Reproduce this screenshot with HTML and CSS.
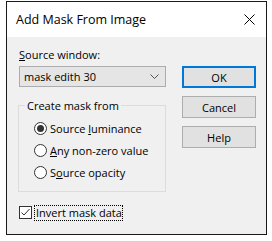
FILE: index.html
```html
<!DOCTYPE html>
<html>
<head>
<meta charset="utf-8">
<link rel="stylesheet" href="styles.css">
</head>
<body>
<div class="window">
  <div class="titlebar">
    <span class="title">Add Mask From Image</span>
    <svg class="close" width="11" height="11" viewBox="0 0 11 11"><path d="M0.5 0.5 L10.5 10.5 M10.5 0.5 L0.5 10.5" stroke="#000" stroke-width="1" fill="none"/></svg>
  </div>
  <div class="content">
    <div class="left">
      <div class="label"><u>S</u>ource window:</div>
      <div class="combo">
        <span>mask edith 30</span>
        <svg class="chev" width="9" height="5" viewBox="0 0 9 5"><path d="M0.5 0.5 L4.5 4.5 L8.5 0.5" stroke="#555" stroke-width="1" fill="none"/></svg>
      </div>
      <fieldset class="group">
        <legend>Create mask from</legend>
        <div class="radio"><span class="circle on"></span><span>Source <u>l</u>uminance</span></div>
        <div class="radio"><span class="circle"></span><span><u>A</u>ny non-zero value</span></div>
        <div class="radio"><span class="circle"></span><span>S<u>o</u>urce opacity</span></div>
      </fieldset>
      <div class="check">
        <span class="box"><svg width="11" height="11" viewBox="0 0 11 11"><path d="M1.5 5.5 L4 8 L9.5 2" stroke="#333" stroke-width="1" fill="none"/></svg></span>
        <span class="focus">Invert mask data</span>
      </div>
    </div>
    <div class="buttons">
      <div class="btn default">OK</div>
      <div class="btn">Cancel</div>
      <div class="btn">Help</div>
    </div>
  </div>
</div>
</body>
</html>
```
FILE: styles.css
```css
* { box-sizing: border-box; }
html, body { margin: 0; padding: 0; background: #fff; }
body {
  font-family: "Open Sans", "Noto Sans", sans-serif;
  font-size: 11px;
  color: #000;
}
.window {
  margin: 1px 0 0 6px;
  width: 261px;
  height: 234px;
  border: 1px solid #1a1a1a;
  background: #f0f0f0;
  display: flex;
  flex-direction: column;
}
.titlebar {
  height: 35px;
  background: #fff;
  display: flex;
  align-items: center;
  justify-content: space-between;
  padding: 0 11px 0 9px;
}
.title { font-size: 12.5px; }
.close { display: block; }
.content {
  display: flex;
  padding: 10px 0 0 12px;
  gap: 16px;
}
.left { width: 147px; display: flex; flex-direction: column; }
.label { height: 15px; line-height: 15px; }
u { text-decoration: underline; text-underline-offset: 1px; }
.combo {
  margin-top: 4px;
  height: 21px;
  background: #e5e5e5;
  border: 1px solid #acacac;
  display: flex;
  align-items: center;
  justify-content: space-between;
  padding: 0 6px 0 4px;
}
.chev { display: block; }
.group {
  margin: 11px 0 0 -1px;
  padding: 4px 0 8px 15px;
  border: 1px solid #dcdcdc;
  min-width: 0;
}
.group legend {
  margin-left: -9px;
  padding: 0 2px;
  line-height: 15px;
}
.radio {
  height: 22px;
  display: flex;
  align-items: center;
  gap: 3px;
}
.circle {
  width: 13px;
  height: 13px;
  border-radius: 50%;
  border: 1px solid #333;
  background: #fff;
  position: relative;
  flex: none;
}
.circle.on::after {
  content: "";
  position: absolute;
  left: 2px; top: 2px;
  width: 7px; height: 7px;
  border-radius: 50%;
  background: #333;
}
.check {
  margin-top: 12px;
  height: 17px;
  display: flex;
  align-items: center;
  gap: 2px;
}
.box {
  width: 13px; height: 13px;
  border: 1px solid #333;
  background: #fff;
  display: flex;
  align-items: center;
  justify-content: center;
  flex: none;
}
.box svg { display: block; }
.focus {
  border: 1px dotted #000;
  padding: 0 0 0 1px;
  line-height: 14px;
}
.buttons {
  width: 74px;
  padding-top: 19px;
  display: flex;
  flex-direction: column;
  gap: 8px;
}
.btn {
  height: 22px;
  background: #e1e1e1;
  border: 1px solid #adadad;
  display: flex;
  align-items: center;
  justify-content: center;
}
.btn.default { border: 2px solid #0078d7; }
```
